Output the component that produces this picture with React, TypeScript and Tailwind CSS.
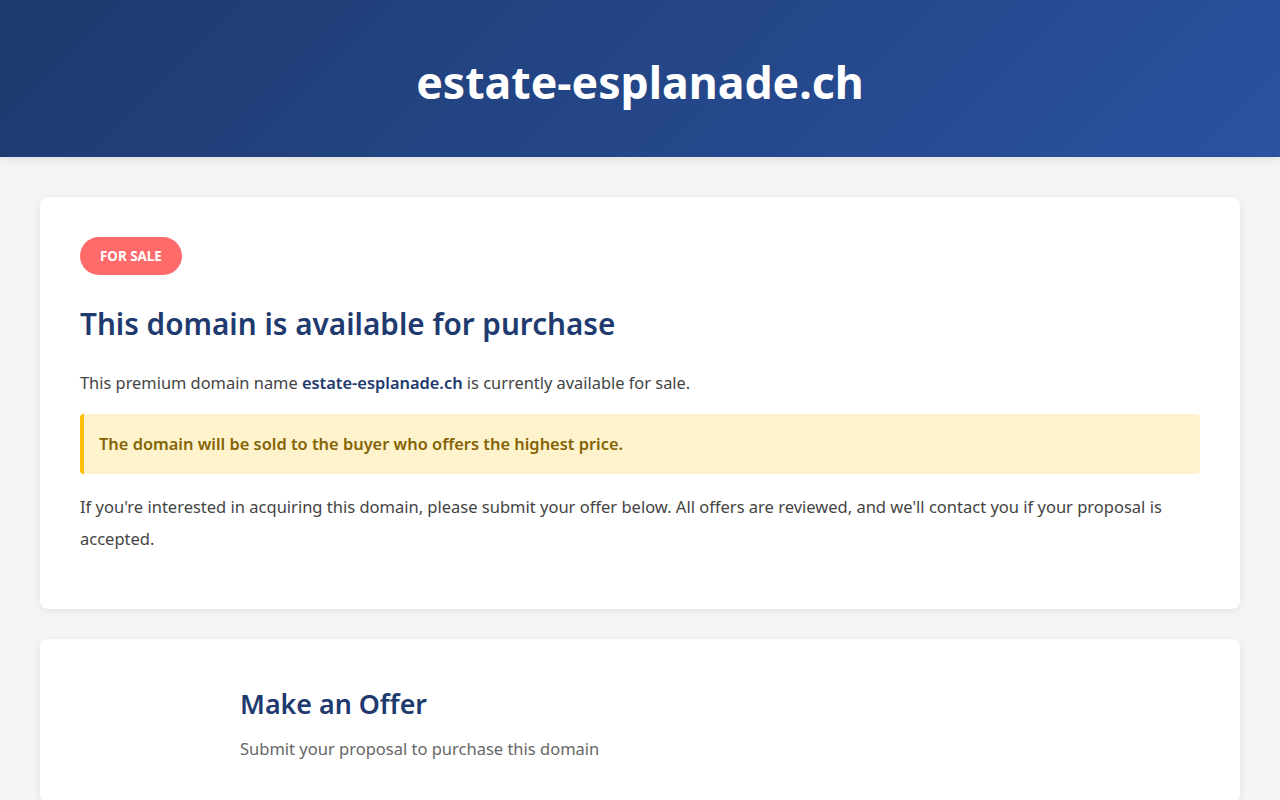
export default function App() {
  return (
    <div className="min-h-screen bg-[#f5f5f5] font-['Noto_Sans',sans-serif] text-[#333]">
      {/* header */}
      <header className="bg-[linear-gradient(135deg,#1e3a6e_0%,#2a52a0_100%)] pb-[48px] pt-[55px] text-center text-white shadow-[0_2px_10px_rgba(0,0,0,0.1)]">
        <h1 className="text-[44.6px] font-bold leading-[54px]">estate-esplanade.ch</h1>
      </header>

      <main className="mx-auto max-w-[1200px] py-10">
        <section className="rounded-lg bg-white p-10 shadow-[0_2px_10px_rgba(0,0,0,0.08)]">
          <span className="inline-block rounded-full bg-[#ff6b6b] px-5 py-[9px] text-[13.4px] font-bold uppercase leading-5 text-white">
            For sale
          </span>
          <h2 className="mt-[27px] text-[29.7px] font-semibold leading-[44px] text-[#1e3a6e]">
            This domain is available for purchase
          </h2>
          <p className="mt-[21px] text-[16.4px] leading-[32px] text-[#444]">
            This premium domain name <strong className="font-semibold text-[#1e3a6e]">estate-esplanade.ch</strong> is
            currently available for sale.
          </p>
          <div className="mt-[15px] rounded border-l-4 border-[#ffc107] bg-[#fff3cd] px-[15px] py-[15px] text-[16.4px] font-semibold leading-[30px] text-[#856404]">
            The domain will be sold to the buyer who offers the highest price.
          </div>
          <p className="mb-[14px] mt-[17px] text-[16.5px] leading-[32px] text-[#444]">
            If you're interested in acquiring this domain, please submit your offer below. All offers are reviewed, and
            we'll contact you if your proposal is accepted.
          </p>
        </section>

        <section className="mt-[30px] rounded-lg bg-white px-10 pb-10 pt-[45px] shadow-[0_2px_10px_rgba(0,0,0,0.08)]">
          <div className="mx-auto max-w-[800px]">
            <h2 className="text-[26.8px] font-semibold leading-[40px] text-[#1e3a6e]">Make an Offer</h2>
            <p className="mt-[12px] text-[16.5px] leading-[26px] text-[#666]">Submit your proposal to purchase this domain</p>
          </div>
        </section>
      </main>
    </div>
  );
}
